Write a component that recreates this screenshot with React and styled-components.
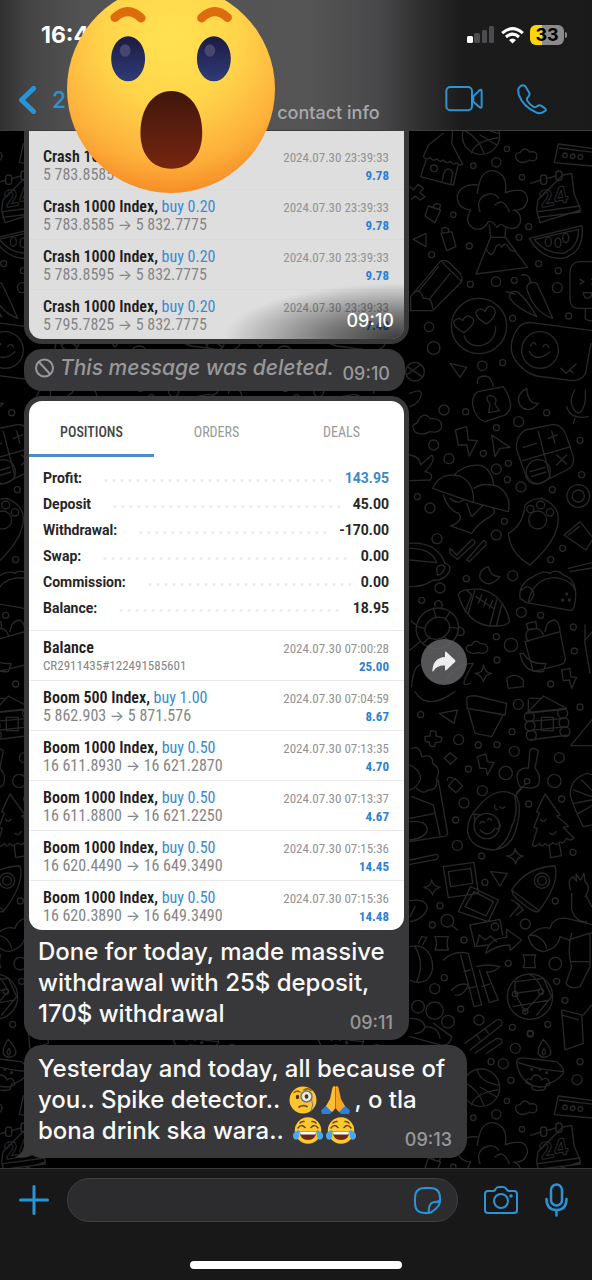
import React from "react";
import styled, { createGlobalStyle, css } from "styled-components";

const ui = `Inter, "Liberation Sans", sans-serif`;
const condensed = `"Roboto Condensed", "Liberation Sans Narrow", Roboto, sans-serif`;

const GlobalStyle = createGlobalStyle`
  * { box-sizing: border-box; }
  body { margin: 0; background: #000; font-family: ${ui}; }
  button { border: 0; padding: 0; background: none; font: inherit; color: inherit; cursor: pointer; display: block; }
  svg { display: block; }
`;

const Screen = styled.div`
  min-height: 100vh;
  display: flex;
  flex-direction: column;
  overflow: hidden;
`;

const Header = styled.header`
  position: relative;
  z-index: 2;
  border-bottom: 1px solid #3c3c3d;
  background: linear-gradient(90deg, #303030 0%, #454545 5%, #535353 14%, #555 52%, #48484a 64%, #2c2c2d 72%, #1b1b1b 78%, #1a1a1a 100%);
`;

const StatusBar = styled.div`
  display: flex;
  align-items: center;
  justify-content: space-between;
  height: 70px;
  padding: 0 25px 0 41px;
  color: #fff;
`;

const Clock = styled.time`
  font-size: 23px;
  font-weight: 700;
  line-height: 28px;
`;

const StatusIcons = styled.div`
  display: flex;
  align-items: center;
  gap: 6px;
`;

const Battery = styled.div`
  position: relative;
  width: 34px;
  height: 20px;
  margin-right: 3px;
  border-radius: 6px;
  background: linear-gradient(90deg, #fdd60a 35%, #8b8b8d 35%);
  color: #000;
  font-size: 18px;
  font-weight: 700;
  line-height: 20px;
  text-align: center;
  &::after {
    content: "";
    position: absolute;
    right: -3px;
    top: 7px;
    width: 2px;
    height: 6px;
    border-radius: 0 2px 2px 0;
    background: #8b8b8d;
  }
`;

const NavBar = styled.nav`
  display: flex;
  align-items: center;
  height: 60px;
  padding: 0 45px 2px 18px;
`;

const BackLink = styled.a`
  display: flex;
  align-items: center;
  gap: 15px;
  padding-top: 2px;
  color: #2a94d6;
  font-size: 23px;
  font-weight: 500;
  line-height: 28px;
  text-decoration: none;
`;

const ContactInfo = styled.div`
  flex: 1;
  padding: 28px 0 0 211px;
  color: #a9a9ad;
  font-size: 18px;
  font-weight: 500;
  line-height: 20px;
  white-space: nowrap;
`;

const NavActions = styled.div`
  display: flex;
  align-items: center;
  gap: 34px;
`;

const Reaction = styled.div`
  position: absolute;
  left: 67px;
  top: -15px;
`;

const Chat = styled.main`
  position: relative;
  flex: 1;
  display: flex;
  flex-direction: column;
  align-items: flex-start;
  gap: 5px;
  padding: 0 24px 10px;
  overflow: hidden;
  background: #000;
`;

const Wallpaper = styled.svg`
  position: absolute;
  inset: 0;
  width: 100%;
  height: 100%;
`;

const Bubble = styled.article`
  position: relative;
  width: ${(p) => p.$width || 385}px;
  max-width: 100%;
  padding: ${(p) => (p.$media ? "5px" : "0")};
  border-radius: 18px;
  background: #38383a;
  ${(p) =>
    p.$clipped &&
    css`
      padding-top: 0;
      border-radius: 0 0 18px 18px;
    `}
`;

const Time = styled.time`
  font-size: 18px;
  font-weight: 500;
  line-height: 20px;
  color: ${(p) => (p.$bright ? "#fff" : "#98989b")};
`;

const DeletedNote = styled.div`
  display: flex;
  align-items: center;
  gap: 6px;
  height: 42px;
  padding: 0 15px 0 11px;
  color: #98989b;
  ${Time} { padding-top: 8px; }
`;

const DeletedText = styled.em`
  flex: 1;
  padding-bottom: 4px;
  font-size: 21px;
  font-weight: 500;
  line-height: 28px;
  white-space: nowrap;
`;

const Media = styled.div`
  position: relative;
`;

const Card = styled.section`
  overflow: hidden;
  border-radius: ${(p) => (p.$dim ? "0 0 13px 13px" : "13px")};
  padding-top: ${(p) => (p.$dim ? "8px" : "0")};
  background: ${(p) => (p.$dim ? "#dedede" : "#fff")};
`;

const CardShade = styled.div`
  position: absolute;
  inset: 0;
  display: flex;
  align-items: flex-end;
  justify-content: flex-end;
  padding: 0 10px 8px;
  border-radius: 0 0 13px 13px;
  background: radial-gradient(ellipse 180px 56px at 100% 100%, rgba(0, 0, 0, 0.75), rgba(0, 0, 0, 0.45) 45%, transparent);
`;

const Tabs = styled.div`
  display: grid;
  grid-template-columns: repeat(3, 1fr);
`;

const Tab = styled.button`
  height: 56px;
  padding-top: 8px;
  border-bottom: 3px solid ${(p) => (p.$active ? "#4b8ccb" : "transparent")};
  color: ${(p) => (p.$active ? "#444" : "#999")};
  font-family: ${condensed};
  font-size: 14px;
  font-weight: ${(p) => (p.$active ? 500 : 400)};
  line-height: 18px;
`;

const Summary = styled.dl`
  margin: 0;
  padding: 8px 15px 9px 14px;
`;

const SummaryRow = styled.div`
  display: flex;
  align-items: center;
  height: 26px;
  color: #262626;
  font-family: Roboto, sans-serif;
  font-size: 14px;
  font-weight: 700;
  line-height: 18px;
  dd { margin: 0; color: ${(p) => (p.$blue ? "#3d87cb" : "inherit")}; }
`;

const Dots = styled.span`
  flex: 1;
  height: 3px;
  margin: 4px 10px 0 20px;
  background: radial-gradient(circle, #ececec 1px, transparent 2px) 0 0 / 8px 3px;
`;

const Deals = styled.table`
  width: 100%;
  border-collapse: separate;
  border-spacing: 0;
  font-family: ${condensed};
`;

const DealCell = styled.td`
  height: 50px;
  padding: 8px 15px 5px 14px;
  border-top: 1px solid ${(p) => (p.$dim ? "#d9d9d9" : "#ebebeb")};
  vertical-align: top;
  text-align: ${(p) => (p.$end ? "right" : "left")};
  white-space: nowrap;
  tr:first-child > & { border-top-color: ${(p) => (p.$dim ? "transparent" : "#ebebeb")}; }
`;

const DealName = styled.div`
  color: #1e1e1e;
  font-size: 16px;
  font-weight: 600;
  line-height: 18px;
  span { color: #3c8ace; font-weight: 400; }
`;

const DealPrice = styled.div`
  color: #858585;
  font-size: ${(p) => (p.$small ? 13 : 16)}px;
  font-weight: 400;
  line-height: 18px;
`;

const Arrow = styled.span`
  font-family: ${ui};
  font-size: 15px;
  line-height: 1;
`;

const DealDate = styled.div`
  color: #929292;
  font-size: 13px;
  line-height: 20px;
`;

const DealValue = styled.div`
  color: #2f7fd0;
  font-size: 13px;
  font-weight: 700;
  line-height: 16px;
`;

const TextBody = styled.div`
  position: relative;
  display: grid;
  padding: ${(p) => (p.$caption ? "6px 11px 6px 9px" : "8px 15px 12px 14px")};
  > * { grid-area: 1 / 1; }
  ${Time} { align-self: end; justify-self: end; margin-bottom: -4px; }
`;

const Text = styled.p`
  margin: 0;
  color: #fafafa;
  font-size: 24px;
  font-weight: 500;
  line-height: 31px;
`;

const Line = styled.span`
  display: flex;
  align-items: center;
  gap: 3px;
  white-space: pre;
`;

const ForwardButton = styled.button`
  position: absolute;
  right: -63px;
  top: calc(50% - 27px);
  width: 46px;
  height: 46px;
  border-radius: 50%;
  background: rgba(100, 100, 102, 0.85);
  svg { margin: 0 auto; }
`;

const Tail = styled.svg`
  position: absolute;
  left: -9px;
  bottom: 0;
`;

const Composer = styled.footer`
  position: relative;
  border-top: 1px solid #39393a;
  padding: 9px 0 11px;
  background: #181818;
`;

const ComposerRow = styled.form`
  display: flex;
  align-items: center;
  padding: 0 24px 0 19px;
`;

const Field = styled.label`
  flex: 1;
  display: flex;
  align-items: center;
  min-width: 0;
  height: 44px;
  margin: 0 26px 0 18px;
  padding: 0 16px;
  border: 1px solid #404042;
  border-radius: 22px;
  background: #2c2c2e;
`;

const Input = styled.input`
  flex: 1;
  min-width: 0;
  border: 0;
  outline: 0;
  background: none;
  color: #fff;
  font: 500 20px ${ui};
`;

const MicButton = styled.button`
  margin-left: 27px;
`;

const HomeBar = styled.div`
  width: 212px;
  height: 8px;
  margin: 39px auto 0;
  border-radius: 4px;
  background: #fff;
`;

const line = { fill: "none", stroke: "#2a94d6", strokeLinecap: "round", strokeLinejoin: "round" };

function SurprisedFace() {
  return (
    <svg width="208" height="208" viewBox="199 -45 626 626" role="img" aria-label="Surprised face">
      <defs>
        <radialGradient id="face" cx="0.5" cy="0.25" r="0.8">
          <stop offset="0" stopColor="#ffe251" />
          <stop offset="0.4" stopColor="#ffd54a" />
          <stop offset="0.75" stopColor="#fdb03b" />
          <stop offset="1" stopColor="#f58220" />
        </radialGradient>
        <linearGradient id="eye" x2="0" y2="1">
          <stop offset="0" stopColor="#1c1b42" />
          <stop offset="1" stopColor="#2f3c78" />
        </linearGradient>
        <linearGradient id="mouth" x2="0" y2="1">
          <stop offset="0" stopColor="#40160c" />
          <stop offset="1" stopColor="#76260f" />
        </linearGradient>
      </defs>
      <circle cx="512" cy="268" r="313" fill="url(#face)" />
      <g fill="none" stroke="#dd6c0c" strokeWidth="27" strokeLinecap="round">
        <path d="M343 53Q383 17 422 54" />
        <path d="M604 54Q643 17 682 53" />
      </g>
      <ellipse cx="383" cy="177" rx="51" ry="68" fill="url(#eye)" />
      <ellipse cx="641" cy="177" rx="51" ry="68" fill="url(#eye)" />
      <ellipse cx="374" cy="152" rx="16" ry="19" fill="#47466e" />
      <ellipse cx="629" cy="152" rx="16" ry="19" fill="#47466e" />
      <path d="M513 274C567 274 606 325 606 400C606 465 572 508 513 508C454 508 420 465 420 400C420 325 459 274 513 274Z" fill="url(#mouth)" />
    </svg>
  );
}

function MonocleEmoji() {
  return (
    <svg width="28" height="28" viewBox="0 0 28 28" role="img" aria-label="Face with monocle">
      <circle cx="14" cy="14" r="13.500" fill="#fdc62f" />
      <path d="M5 6.500Q8 4 11 6M15 4Q19 1.500 22 4.500" fill="none" stroke="#9a5a10" strokeWidth="1.500" strokeLinecap="round" />
      <ellipse cx="8.500" cy="11" rx="1.700" ry="2.300" fill="#553012" />
      <circle cx="17.500" cy="10.500" r="5.500" fill="#e7eadf" stroke="#70777c" strokeWidth="1.500" />
      <ellipse cx="17.500" cy="10.500" rx="1.800" ry="2.300" fill="#553012" />
      <path d="M22.500 13Q25 19 22 25" fill="none" stroke="#777" strokeWidth="1" />
      <path d="M10 21Q14 18.500 18 20.500" fill="none" stroke="#7c4710" strokeWidth="1.700" strokeLinecap="round" />
    </svg>
  );
}

function PrayEmoji() {
  return (
    <svg width="31" height="28" viewBox="0 0 31 28" role="img" aria-label="Folded hands">
      <path d="M1 24.500L8 18L14 24L10 28H2Z" fill="#2f7fdc" />
      <path d="M30 24.500L23 18L17 24L21 28H29Z" fill="#2f7fdc" />
      <path d="M14.500 0Q12.500 0 12 4L10 13L6 20L12 26L15.500 22V1Z" fill="#fdbf2f" />
      <path d="M16.500 0Q18.500 0 19 4L21 13L25 20L19 26L15.500 22V1Z" fill="#f3a526" />
      <path d="M15.500 2V22" stroke="#b4690f" strokeWidth="1" />
    </svg>
  );
}

function JoyEmoji() {
  return (
    <svg width="30" height="28" viewBox="0 0 30 28" role="img" aria-label="Tears of joy">
      <circle cx="15" cy="13.500" r="13.200" fill="#fdc92f" />
      <path d="M5 11Q8 6.500 12 10.500M18 10.500Q22 6.500 25 11M7 6Q9 4 11 4.500M19 4.500Q21 4 23 6" fill="none" stroke="#6b3d10" strokeWidth="1.500" strokeLinecap="round" />
      <path d="M6.500 14H23.500Q23 23 15 23Q7 23 6.500 14Z" fill="#6a2b12" />
      <path d="M7 14.500H23L22.500 17.500H7.500Z" fill="#fff" />
      <path d="M6 13Q-1 15 0 20Q1.500 24 5 22Q7 19 6 13ZM24 13Q31 15 30 20Q28.500 24 25 22Q23 19 24 13Z" fill="#4aa9ee" />
    </svg>
  );
}

function Doodles() {
  return (
    <g id="doodles">
      <g transform="translate(400 130) scale(.3333)">
        <circle cx="243" cy="17" r="56" />
        <path d="M190 0Q235 20 252 70M215 70Q220 35 298 22M240 15L290 45M232 -35Q240 0 298 10" />
        <path d="M130 10L85 45L70 80Q80 92 90 82Q100 96 110 86Q120 99 130 90Q140 103 150 94Q160 107 170 98Q180 109 188 103L155 40L158 5M78 90L62 140L160 166L174 105M126 155L132 128Q145 105 158 128L152 163" />
        <circle cx="102" cy="115" r="10" />
        <path d="M350 88Q340 70 360 68Q372 46 390 66Q412 62 411 80Q408 98 388 90Q365 106 350 88ZM475 42L600 58V110L463 98ZM478 54L590 68" />
        <circle cx="495" cy="76" r="7" /><circle cx="518" cy="79" r="7" /><circle cx="541" cy="81" r="7" />
        <path d="M240 245Q225 205 265 192Q290 190 295 205M285 225Q310 200 328 245M232 190Q240 120 278 122Q325 130 316 188Q380 165 383 210Q375 245 340 240Q368 250 360 280Q345 305 315 290Q300 275 292 292Q275 270 265 275Q250 305 220 295Q190 275 212 240Q170 235 172 195Q185 160 232 165M268 285L272 322L228 432L382 412L315 320L318 290M272 322H315M258 355Q275 395 288 350Q298 335 305 352Q315 330 330 360L345 365" />
        <path d="M392 160L422 150M442 145L468 138M488 135L515 130L522 190L542 240L420 278L410 240L414 210ZM414 245L540 228M414 262L542 246" />
        <rect x="422" y="135" width="18" height="28" rx="8" /><rect x="468" y="123" width="18" height="28" rx="8" />
        <text x="418" y="226" transform="rotate(-12 455 205)" fontFamily="Inter, sans-serif" fontSize="68" fontWeight="700" strokeWidth="3">24</text>
        <path d="M388 325L546 287Q555 365 490 385Q425 390 388 325ZM403 328L535 298Q538 350 490 370Q435 370 403 328Z" />
        <ellipse cx="445" cy="335" rx="9" ry="14" /><ellipse cx="474" cy="338" rx="9" ry="14" /><ellipse cx="497" cy="324" rx="9" ry="14" />
        <path d="M32 500L120 395Q135 385 150 400L180 430Q195 450 175 465L98 542H32ZM40 490Q60 470 70 505Q95 500 98 535M125 395L185 455M115 410L55 485M150 430L90 505" />
        <circle cx="237" cy="588" r="83" />
        <path d="M192 608Q150 585 165 570Q180 560 188 572Q200 548 218 565Q230 580 192 608ZM260 582Q220 560 230 542Q245 530 255 545Q265 520 282 535Q295 555 260 582ZM193 618C205 665 290 655 287 590" />
        <path d="M330 505Q325 480 350 485Q375 500 410 560M330 505Q350 535 410 560M380 475Q385 450 410 460Q435 510 458 565Q400 545 380 475M365 435Q390 430 392 460M318 485L345 492" />
        <path d="M600 395H535Q510 400 510 430V510Q512 535 535 535H600M540 448L552 455L540 462M575 448L587 455L575 462M550 488H575Q575 505 562 505Q552 505 550 488M556 538V565Q560 575 600 573" />
        <path d="M345 690Q320 650 350 600Q365 575 395 578L600 605M345 690Q375 730 410 738L515 752Q560 750 560 710L573 640" />
        <circle cx="420" cy="660" r="55" />
        <path d="M392 648Q400 630 408 644M428 650Q438 635 446 652M388 665Q410 700 450 665M483 715L498 730L528 703M510 722L520 728" />
        <path d="M30 170L40 180L55 163L70 175L60 188L75 200L60 210L45 198L35 208M85 228L122 240L105 278L75 258ZM100 230Q105 215 122 225L118 238M40 328L78 310V350ZM123 310L155 305L168 350L140 362ZM128 308Q120 292 135 292Q150 295 145 306M150 700L200 712L180 742ZM232 760Q230 738 255 738Q275 740 280 770" />
        <circle cx="45" cy="725" r="28" /><path d="M22 710L66 740M20 735L60 705" />
        <circle cx="321" cy="57" r="8" /><circle cx="289" cy="97" r="14" /><circle cx="220" cy="107" r="8" /><circle cx="366" cy="142" r="8" /><circle cx="160" cy="254" r="8" />
        <circle cx="386" cy="290" r="9" /><circle cx="357" cy="322" r="9" /><circle cx="208" cy="348" r="9" /><circle cx="95" cy="374" r="9" /><circle cx="416" cy="401" r="9" /><circle cx="475" cy="422" r="9" /><circle cx="472" cy="473" r="15" /><circle cx="288" cy="455" r="14" /><circle cx="211" cy="463" r="9" /><circle cx="343" cy="451" r="9" /><circle cx="87" cy="591" r="14" /><circle cx="101" cy="654" r="19" /><circle cx="247" cy="707" r="14" /><circle cx="308" cy="698" r="9" /><circle cx="338" cy="565" r="9" /><circle cx="506" cy="558" r="9" />
      </g>
      <g transform="translate(400 390) scale(.3333)">
        <path d="M235 5L310 -10Q330 20 332 45Q330 75 300 80L255 95Q225 85 218 45Q215 15 235 5ZM266 68L270 42Q250 20 272 16Q295 22 285 42L298 62Z" />
        <path d="M380 -5Q345 15 360 45Q385 75 415 40Q385 45 380 -5ZM520 55Q505 30 525 0M556 0Q560 50 540 68Q525 70 518 50M500 50Q510 90 565 80M525 85L520 100" />
        <path d="M45 125Q30 105 50 100Q70 60 90 85Q130 85 124 115Q115 130 90 125Q65 140 45 125ZM166 120L200 110L205 150L232 152L208 198L200 165L175 165ZM275 135L330 172L300 175L285 200Z" />
        <path d="M375 120L460 103Q490 105 500 140L520 200Q525 230 500 240L420 280Q385 290 375 250L350 180Q345 140 375 120ZM415 125L450 260M368 212L512 170M370 172L410 160M445 145L472 135M455 123L465 160M470 225L500 195M470 195L500 222" />
        <circle cx="415" cy="245" r="36" /><path d="M390 245L435 232M395 260L438 246" />
        <path d="M98 295Q120 245 180 258Q225 280 220 338ZM160 258Q190 220 245 226Q275 240 282 285M222 295Q250 275 295 290Q335 315 325 365L222 338M130 315Q145 360 175 370Q195 390 152 408L215 430Q235 400 270 380Q290 370 280 355M150 325Q170 345 190 330M200 340L215 380L250 345" />
        <path d="M375 345Q395 325 425 325Q475 345 475 385Q475 450 390 525Q330 490 325 430Q370 405 375 345Z" /><circle cx="413" cy="390" r="27" /><circle cx="391" cy="357" r="11" /><circle cx="422" cy="345" r="12" /><circle cx="450" cy="367" r="11" />
        <path d="M30 460Q110 455 135 520Q155 525 148 545Q130 575 100 570Q75 590 30 590M30 475Q95 475 110 518L30 510M110 535Q120 520 135 530Q130 555 112 555ZM30 195Q60 200 62 225L95 195Q110 210 75 245Q105 250 90 270L30 272M150 475L170 495L215 450Q225 445 225 460L172 508L150 490ZM200 510L250 452Q260 450 258 465L208 515Z" />
        <path d="M30 10Q60 -5 65 10Q60 40 30 50M265 530Q235 540 240 565Q265 600 300 560Q270 560 265 530Z" />
        <circle cx="535" cy="318" r="34" /><circle cx="535" cy="318" r="18" />
        <path d="M492 435L540 395L580 445L558 480ZM505 435L538 410M505 535L600 512M510 545L600 530" />
        <path d="M175 615Q180 595 245 598Q310 615 328 690Q330 710 270 708Q200 700 175 615ZM200 600L215 615L195 665M225 598L205 670M290 630L270 705M305 645L290 705M228 620L280 655M235 640L245 615M252 648L260 625M268 655L278 632" />
        <path d="M360 625Q355 580 400 560Q430 540 450 550Q470 535 490 555Q530 570 527 620Q525 655 515 662L380 638ZM385 635Q400 565 465 563Q515 570 525 600M365 600Q385 580 395 600Q410 610 390 635" /><circle cx="500" cy="612" r="3" /><circle cx="488" cy="630" r="3" /><circle cx="508" cy="630" r="3" />
        <ellipse cx="112" cy="715" rx="64" ry="60" transform="rotate(-25 112 715)" /><ellipse cx="112" cy="715" rx="38" ry="32" transform="rotate(-25 112 715)" /><path d="M100 655L108 682M150 665L135 690M176 715L148 712M150 760L132 738M70 760L90 740M50 710L75 715M105 650Q100 630 118 632Q130 640 125 652M175 710Q195 715 192 730Q185 740 172 735M50 705Q30 695 35 690M60 755L30 780" />
        <path d="M375 755L480 725L495 800Q500 820 480 825L400 845ZM385 755Q370 735 385 720L410 715Q425 720 430 735M380 700L408 695L410 715L383 718ZM435 725Q440 690 465 690Q480 700 480 725M360 790Q370 850 430 845L438 820Q390 825 370 790Z" />
        <path d="M200 780Q195 765 215 765Q225 745 240 760Q265 760 263 780Q255 795 235 788Q210 795 200 780ZM250 825Q255 850 275 850Q255 855 250 875Q245 855 225 850Q250 850 250 825ZM485 840L510 835L512 860L530 862L515 895L508 870L490 872ZM320 865Q345 845 370 870V890L325 895ZM555 750L600 700M555 705V760L570 850M35 890Q40 830 60 825M140 870Q170 820 220 820Q170 900 210 880" />
        <circle cx="132" cy="60" r="15" /><circle cx="197" cy="65" r="9" /><circle cx="289" cy="113" r="9" /><circle cx="356" cy="95" r="15" /><circle cx="440" cy="68" r="9" /><circle cx="540" cy="151" r="9" /><circle cx="545" cy="254" r="9" /><circle cx="101" cy="165" r="15" /><circle cx="147" cy="206" r="15" /><circle cx="250" cy="190" r="9" /><circle cx="325" cy="220" r="9" /><circle cx="289" cy="237" r="15" /><circle cx="322" cy="269" r="9" /><circle cx="363" cy="291" r="15" /><circle cx="457" cy="299" r="9" /><circle cx="90" cy="354" r="15" /><circle cx="52" cy="320" r="9" /><circle cx="111" cy="446" r="15" /><circle cx="313" cy="394" r="9" /><circle cx="289" cy="435" r="15" /><circle cx="488" cy="475" r="9" /><circle cx="452" cy="509" r="9" /><circle cx="338" cy="557" r="15" /><circle cx="199" cy="566" r="9" /><circle cx="120" cy="594" r="15" /><circle cx="65" cy="631" r="9" /><circle cx="364" cy="667" r="15" /><circle cx="422" cy="676" r="9" /><circle cx="333" cy="765" r="20" /><circle cx="289" cy="740" r="9" /><circle cx="520" cy="711" r="9" /><circle cx="291" cy="810" r="9" /><circle cx="523" cy="783" r="9" /><circle cx="452" cy="882" r="9" />
      </g>
      <g transform="translate(400 690) scale(.3333)">
        <path d="M200 25Q205 15 230 18L320 40L315 75L202 55ZM205 60L225 130L275 140L308 78M45 5Q80 65 165 5M118 70L172 60L162 100ZM385 30V65L430 18L500 55L380 68M388 25H420M378 70L495 58M380 95L495 85M385 122L500 110M388 150L505 135" />
        <circle cx="388" cy="80" r="15" /><circle cx="390" cy="108" r="15" /><circle cx="394" cy="136" r="15" /><circle cx="488" cy="70" r="15" /><circle cx="492" cy="98" r="15" /><circle cx="495" cy="125" r="15" /><rect x="424" y="82" width="36" height="40" />
        <path d="M600 60L512 167H600M75 140L90 138L92 122L108 124V138L126 142L122 156L106 158L104 170L90 168L88 156L76 154ZM133 205L150 188L170 205L152 223ZM232 200L258 192L262 215L282 218L262 255L258 235L240 235ZM145 288L165 265L188 288L168 308ZM142 272Q142 258 158 264" />
        <path d="M35 175Q60 165 65 200Q100 190 98 220Q125 235 110 265Q115 300 85 300Q70 315 50 295M30 225Q60 240 62 265Q55 290 30 300M115 270L143 430Q140 440 125 440L30 455M35 320L100 345L120 435M30 385L105 370M30 395Q80 390 82 420Q75 445 30 450M30 510L110 493Q120 500 110 508L30 523" />
        <path d="M390 180Q400 170 415 182L405 235Q425 255 415 285Q400 300 360 290Q345 260 355 245Q370 230 385 235ZM378 280L345 318M365 290L350 308" /><circle cx="381" cy="274" r="8" />
        <path d="M280 312Q320 295 350 320Q365 350 352 400Q340 475 280 480Q210 475 203 425Q200 385 235 350Q255 325 280 312ZM345 320Q355 370 335 410Q320 460 290 478M285 345Q280 355 292 360M300 350Q305 360 315 350" /><circle cx="260" cy="408" r="38" /><path d="M240 400Q245 390 255 398M262 390Q270 380 275 392M240 420Q265 445 285 415M225 390L222 372L240 375M295 390L302 410L290 418" />
        <path d="M435 312L480 375L470 378L505 408L490 412L522 445Q510 455 500 445Q490 465 480 455Q470 470 458 458Q445 475 435 460Q425 475 418 460Q405 475 397 465L412 415L402 412L418 370L410 365ZM448 465L452 503L485 497L478 462M422 388Q430 400 438 388M450 430Q460 440 468 425" />
        <path d="M345 475Q350 497 370 498Q350 502 347 522Q342 502 320 498Q345 497 345 475ZM95 570Q100 590 120 592Q100 597 98 615Q92 597 72 592Q92 590 95 570ZM272 545L322 550L300 588ZM130 530L222 517L235 610L145 623ZM145 545L212 535L218 580L152 590ZM175 665L212 590L295 630L265 695ZM195 650L222 605L280 635L258 678ZM210 705L300 688L308 735M210 705L225 770L262 765M230 765L238 735L255 750L272 738L290 755" /><circle cx="285" cy="710" r="11" />
        <path d="M258 790Q265 745 320 742V718L365 750L330 782V765Q290 765 258 790Z" />
        <path d="M335 600Q380 530 465 528Q480 580 415 665Q395 670 340 615ZM335 600L415 660M335 630L360 645L330 680M350 640L370 660L350 675" /><circle cx="426" cy="572" r="23" /><circle cx="426" cy="572" r="13" />
        <path d="M512 600Q500 570 520 560L530 575L528 552L542 570L552 550L555 575Q575 590 555 620M515 610V660Q530 700 560 695M560 620L575 650M385 740Q395 780 430 785Q475 775 480 740L505 750L600 720M385 740Q420 705 450 715M450 715Q460 680 500 685L600 710M515 730Q500 780 515 830L498 880Q510 900 540 890L570 830V730M388 735Q430 735 440 775M515 815H570" />
        <circle cx="142" cy="692" r="19" /><path d="M155 705L172 720M30 632Q80 625 82 655Q70 690 30 695M30 680L45 650M105 740H145Q138 760 145 780H105Q114 760 105 740ZM370 795H407Q400 815 407 833H370Q378 815 370 795M30 770Q70 760 90 795Q110 840 80 870Q55 885 30 870M55 760L65 740L80 742L68 765M45 770Q75 820 50 875" />
        <path d="M130 810Q160 780 205 790L245 945L222 950L182 795M192 845L212 840M205 895L228 890M230 830Q260 820 300 830Q280 850 260 845L295 930L268 938L238 840M155 900Q180 875 205 885Q190 920 165 915M245 890L270 882" />
        <circle cx="390" cy="920" r="68" /><path d="M345 875L430 865L455 920L410 975M345 910L415 900M340 950L450 930M390 855Q410 860 430 905L375 965M345 910L375 965M345 875V910" /><circle cx="345" cy="912" r="8" /><circle cx="423" cy="905" r="8" /><circle cx="376" cy="964" r="8" />
        <circle cx="54" cy="950" r="19" /><circle cx="104" cy="962" r="26" /><circle cx="144" cy="995" r="19" /><path d="M30 985Q70 985 75 1010Q70 1030 45 1030M75 1010Q115 1010 120 1045M30 1040L120 1065Q150 1070 155 1040L100 1000M195 1060L290 990Q310 985 305 1005L210 1080M225 1090L290 1045Q310 1045 305 1060L260 1090M230 1035L240 1050M255 1015L265 1030" />
        <path d="M485 960L545 975L550 1060L495 1080ZM550 975L575 945L600 955M485 975L535 990M512 320Q505 270 560 250L600 260M512 320Q530 375 550 410L600 400M520 300L575 320M545 270L575 300M520 340L575 330M535 370L580 345" />
        <circle cx="62" cy="74" r="9" /><circle cx="176" cy="149" r="15" /><circle cx="235" cy="165" r="9" /><circle cx="291" cy="164" r="9" /><circle cx="343" cy="184" r="15" /><circle cx="355" cy="43" r="15" /><circle cx="540" cy="51" r="9" /><circle cx="336" cy="125" r="9" /><circle cx="478" cy="203" r="15" /><circle cx="317" cy="249" r="20" /><circle cx="205" cy="237" r="9" /><circle cx="463" cy="273" r="20" /><circle cx="247" cy="302" r="15" /><circle cx="192" cy="339" r="15" /><circle cx="386" cy="342" r="9" /><circle cx="485" cy="327" r="9" /><circle cx="167" cy="390" r="9" /><circle cx="172" cy="466" r="15" /><circle cx="245" cy="498" r="9" /><circle cx="519" cy="487" r="9" /><circle cx="255" cy="577" r="9" /><circle cx="466" cy="633" r="9" /><circle cx="376" cy="702" r="15" /><circle cx="120" cy="647" r="9" /><circle cx="97" cy="705" r="9" /><circle cx="192" cy="750" r="9" /><circle cx="325" cy="820" r="9" /><circle cx="466" cy="821" r="19" /><circle cx="133" cy="863" r="9" /><circle cx="104" cy="896" r="15" /><circle cx="470" cy="874" r="9" /><circle cx="182" cy="957" r="9" /><circle cx="237" cy="990" r="15" /><circle cx="337" cy="1012" r="9" /><circle cx="391" cy="1030" r="9" /><circle cx="443" cy="1003" r="9" /><circle cx="495" cy="931" r="9" />
      </g>
      <g transform="translate(400 1030) scale(.3333)">
        <path d="M350 95Q350 80 385 85L425 90L470 95Q495 115 490 130Q470 155 440 162L435 178Q415 185 398 178L393 162Q355 145 350 95ZM355 98Q420 120 488 125M430 28Q460 60 450 75Q430 90 415 72Q412 50 430 28ZM432 55Q442 70 430 75Q422 68 432 55M378 158Q380 140 395 150Q395 135 410 135Q425 140 425 150Q445 135 450 165Q420 180 378 158Z" />
        <circle cx="395" cy="118" r="3" /><circle cx="420" cy="118" r="3" /><circle cx="440" cy="128" r="3" /><circle cx="346" cy="55" r="15" /><circle cx="391" cy="12" r="9" /><circle cx="310" cy="101" r="15" /><circle cx="273" cy="95" r="9" /><circle cx="540" cy="95" r="9" /><circle cx="531" cy="149" r="15" /><circle cx="333" cy="151" r="9" />
      </g>
    </g>
  );
}

function ChatWallpaper() {
  return (
    <Wallpaper aria-hidden="true" fill="none" stroke="#282829" strokeWidth="4" strokeLinejoin="round" strokeLinecap="round">
      <g transform="translate(0 -131)">
        <Doodles />
        <use href="#doodles" x="-535" />
        <use href="#doodles" y="952" />
        <use href="#doodles" x="-535" y="952" />
        <use href="#doodles" x="-200" y="-30" />
        <use href="#doodles" x="-345" y="-30" />
      </g>
    </Wallpaper>
  );
}

function Price({ text }) {
  const [open, close] = text.split(" → ");
  return close ? <>{open} <Arrow>→</Arrow> {close}</> : text;
}

function DealRow({ name, side, price, date, value, dim }) {
  return (
    <tr>
      <DealCell $dim={dim}>
        <DealName>{name}{side && <>, <span>{side}</span></>}</DealName>
        <DealPrice $small={!side}><Price text={price} /></DealPrice>
      </DealCell>
      <DealCell $dim={dim} $end>
        <DealDate>{date}</DealDate>
        <DealValue>{value}</DealValue>
      </DealCell>
    </tr>
  );
}

const crashDeals = [
  ["5 783.8585 → 5 832.7775", "9.78"],
  ["5 783.8585 → 5 832.7775", "9.78"],
  ["5 783.8595 → 5 832.7775", "9.78"],
  ["5 795.7825 → 5 832.7775", "7.48"],
];

const summary = [
  ["Profit:", "143.95"],
  ["Deposit", "45.00"],
  ["Withdrawal:", "-170.00"],
  ["Swap:", "0.00"],
  ["Commission:", "0.00"],
  ["Balance:", "18.95"],
];

const boomDeals = [
  ["Balance", "", "CR2911435#122491585601", "07:00:28", "25.00"],
  ["Boom 500 Index", "buy 1.00", "5 862.903 → 5 871.576", "07:04:59", "8.67"],
  ["Boom 1000 Index", "buy 0.50", "16 611.8930 → 16 621.2870", "07:13:35", "4.70"],
  ["Boom 1000 Index", "buy 0.50", "16 611.8800 → 16 621.2250", "07:13:37", "4.67"],
  ["Boom 1000 Index", "buy 0.50", "16 620.4490 → 16 649.3490", "07:15:36", "14.45"],
  ["Boom 1000 Index", "buy 0.50", "16 620.3890 → 16 649.3490", "07:15:36", "14.48"],
];

export default function App() {
  return (
    <Screen>
      <GlobalStyle />
      <Header>
        <StatusBar>
          <Clock>16:4</Clock>
          <StatusIcons>
            <svg width="28" height="18" viewBox="0 0 28 18" aria-label="Signal">
              <rect x="0" y="10" width="6" height="7" rx="1.500" fill="#fff" />
              <rect x="7" y="7" width="6" height="10" rx="1.500" fill="#4c4c4e" />
              <rect x="15" y="4" width="5" height="13" rx="1.500" fill="#4c4c4e" />
              <rect x="22" y="0" width="5" height="17" rx="1.500" fill="#4c4c4e" />
            </svg>
            <svg width="23" height="17" viewBox="0 0 23 17" aria-label="Wi-Fi" fill="none" stroke="#fff" strokeWidth="3">
              <path d="M1.200 6.200Q11.500 -3 21.800 6.200M5 10Q11.500 4.300 18 10" />
              <path d="M11.500 16.500L8 13Q11.500 10 15 13Z" fill="#fff" stroke="none" />
            </svg>
            <Battery>33</Battery>
          </StatusIcons>
        </StatusBar>
        <NavBar>
          <BackLink href="#chats" aria-label="Back, 2 unread chats">
            <svg width="19" height="28" viewBox="0 0 19 28" {...line} strokeWidth="5"><path d="M15.500 2.500L3.500 14L15.500 25.500" /></svg>
            2
          </BackLink>
          <ContactInfo>contact info</ContactInfo>
          <NavActions>
            <button aria-label="Video call">
              <svg width="38" height="28" viewBox="447 254 114 84" {...line} strokeWidth="6">
                <rect x="451" y="260" width="77" height="70" rx="12" />
                <path d="M532 288L550 270Q557 265 557 272V318Q557 325 550 320L532 304Z" />
              </svg>
            </button>
            <button aria-label="Voice call">
              <svg width="30" height="32" viewBox="663 247 92 96" {...line} strokeWidth="6">
                <path d="M668 262Q680 246 690 258L700 275Q704 282 697 289Q691 294 695 301Q703 313 714 319Q720 322 725 317Q731 312 738 316L748 323Q755 329 749 332Q736 343 720 335Q682 318 669 283Q665 270 668 262Z" />
              </svg>
            </button>
          </NavActions>
        </NavBar>
        <Reaction><SurprisedFace /></Reaction>
      </Header>

      <Chat>
        <ChatWallpaper />
        <Bubble $media $clipped>
          <Media>
            <Card $dim>
              <Deals>
                <tbody>
                  {crashDeals.map(([price, value], i) => (
                    <DealRow key={i} dim name="Crash 1000 Index" side="buy 0.20" price={price} date="2024.07.30 23:39:33" value={value} />
                  ))}
                </tbody>
              </Deals>
            </Card>
            <CardShade><Time $bright>09:10</Time></CardShade>
          </Media>
        </Bubble>

        <Bubble $width={381}>
          <DeletedNote>
            <svg width="19" height="38" viewBox="0 0 19 38" fill="none" stroke="#98989b" strokeWidth="2">
              <circle cx="9.500" cy="17" r="8.500" /><path d="M4 11L15 23" />
            </svg>
            <DeletedText>This message was deleted.</DeletedText>
            <Time>09:10</Time>
          </DeletedNote>
        </Bubble>

        <Bubble $media>
          <Media>
            <Card>
              <Tabs role="tablist">
                <Tab role="tab" aria-selected="true" $active>POSITIONS</Tab>
                <Tab role="tab" aria-selected="false">ORDERS</Tab>
                <Tab role="tab" aria-selected="false">DEALS</Tab>
              </Tabs>
              <Summary>
                {summary.map(([label, value], i) => (
                  <SummaryRow key={label} $blue={i === 0}>
                    <dt>{label}</dt><Dots /><dd>{value}</dd>
                  </SummaryRow>
                ))}
              </Summary>
              <Deals>
                <tbody>
                  {boomDeals.map(([name, side, price, hour, value], i) => (
                    <DealRow key={i} name={name} side={side} price={price} date={`2024.07.30 ${hour}`} value={value} />
                  ))}
                </tbody>
              </Deals>
            </Card>
            <ForwardButton aria-label="Forward">
              <svg width="24" height="22" viewBox="0 0 24 22" fill="#ececec"><path d="M13 1.500Q13 0 14.500 1L23 9Q24 10 23 11L14.500 19Q13 20 13 18.500V14.500Q5 14 1.500 20Q0 22 0.500 18Q2 6.500 13 6Z" /></svg>
            </ForwardButton>
          </Media>
          <TextBody $caption>
            <Text>
              <Line>Done for today, made massive</Line>
              <Line>withdrawal with 25$ deposit,</Line>
              <Line>170$ withdrawal</Line>
            </Text>
            <Time>09:11</Time>
          </TextBody>
        </Bubble>

        <Bubble $width={443}>
          <Tail width="30" height="24" viewBox="0 0 30 24"><path d="M9 0V12Q8 20 0 23Q12 26 22 18L30 0Z" fill="#38383a" /></Tail>
          <TextBody>
            <Text>
              <Line>Yesterday and today, all because of</Line>
              <Line>{"you.. Spike detector.. "}<MonocleEmoji /><PrayEmoji />, o tla</Line>
              <Line>{"bona drink ska wara.. "}<JoyEmoji /><JoyEmoji /></Line>
            </Text>
            <Time>09:13</Time>
          </TextBody>
        </Bubble>
      </Chat>

      <Composer>
        <ComposerRow>
          <button type="button" aria-label="Attach">
            <svg width="30" height="30" viewBox="0 0 30 30" {...line} strokeWidth="3"><path d="M15 1.500V28.500M1.500 15H28.500" /></svg>
          </button>
          <Field>
            <Input type="text" aria-label="Message" />
            <button type="button" aria-label="Stickers">
              <svg width="27" height="27" viewBox="0 0 27 27" {...line} strokeWidth="2">
                <path d="M14 26H11Q1 26 1 16V11Q1 1 11 1H16Q26 1 26 11V14Q26 19 19 24Q17 26 14 26ZM14 26Q15 25 15 21Q16 15 21 15Q25 15 26 13" />
              </svg>
            </button>
          </Field>
          <button type="button" aria-label="Camera">
            <svg width="34" height="28" viewBox="0 0 34 28" {...line} strokeWidth="2">
              <path d="M4 5H9Q10 5 11 4L12 2.500Q13 1 15 1H19Q21 1 22 2.500L23 4Q24 5 25 5H30Q33 5 33 8V24Q33 27 30 27H4Q1 27 1 24V8Q1 5 4 5Z" />
              <circle cx="17" cy="15" r="7" /><circle cx="27" cy="10" r="0.800" />
            </svg>
          </button>
          <MicButton type="button" aria-label="Record">
            <svg width="23" height="34" viewBox="0 0 23 34" {...line} strokeWidth="2.500">
              <rect x="6" y="1.500" width="11" height="21" rx="5.500" /><path d="M1.500 16Q1.500 27 11.500 27Q21.500 27 21.500 16M11.500 27V32.500" />
            </svg>
          </MicButton>
        </ComposerRow>
        <HomeBar />
      </Composer>
    </Screen>
  );
}
